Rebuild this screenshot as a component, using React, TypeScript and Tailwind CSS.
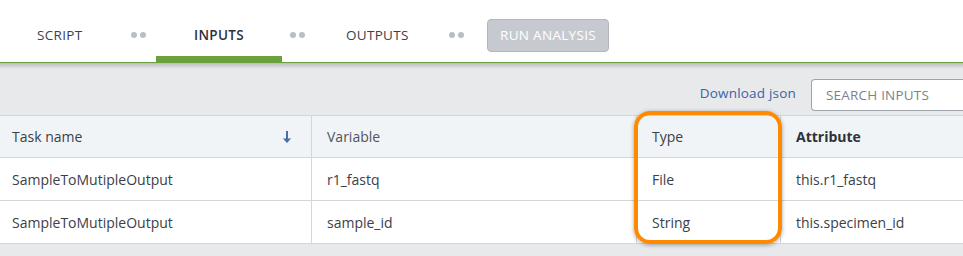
import React from "react";

const font = { fontFamily: '"Open Sans", "Liberation Sans", sans-serif' };

function Dots() {
  return (
    <div className="flex w-[15px] gap-[3px]">
      <span className="h-[6px] w-[6px] rounded-full bg-[#b9bec6]" />
      <span className="h-[6px] w-[6px] rounded-full bg-[#b9bec6]" />
    </div>
  );
}

export default function App() {
  const rows = [
    { task: "SampleToMutipleOutput", variable: "r1_fastq", type: "File", attr: "this.r1_fastq" },
    { task: "SampleToMutipleOutput", variable: "sample_id", type: "String", attr: "this.specimen_id" },
  ];
  return (
    <div className="h-[256px] w-[963px] overflow-hidden bg-[#e8e9eb] text-[#3b4049]" style={font}>
      {/* Header */}
      <div className="relative h-[63px] border-b border-[#6aa13c] bg-white">
        <div className="flex h-[62px] items-center pt-[8px] text-[13.5px] tracking-[0.3px]">
          <div className="ml-[37px] w-[94px] text-[#3b4049]">SCRIPT</div>
          <Dots />
          <div className="relative ml-[10px] flex h-[54px] w-[126px] items-center justify-center font-semibold text-[#2d323b]">
            INPUTS
            <div className="absolute bottom-0 left-0 h-[6px] w-[126px] bg-[#6aa13c]" />
          </div>
          <div className="ml-[8px]">
            <Dots />
          </div>
          <div className="ml-[41px] w-[103px] text-[#3b4049]">OUTPUTS</div>
          <Dots />
          <div className="ml-[23px] flex h-[33px] w-[122px] items-center justify-center rounded-[4px] border border-[#b3b8bf] bg-[#c6cad0] text-[13.5px] text-white">
            RUN ANALYSIS
          </div>
        </div>
      </div>
      <div className="h-[6px] bg-gradient-to-b from-[#b9bbbf] to-[#e8e9eb]" />
      {/* Toolbar */}
      <div className="flex h-[46px] items-end justify-end pb-[4px]">
        <a className="mb-[8px] mr-[15px] text-[13.5px] tracking-[0.2px] text-[#3b63a6]">Download json</a>
        <div className="flex h-[32px] w-[152px] items-center rounded-l-[4px] border border-r-0 border-[#9ea3aa] bg-white pl-[14px] text-[13.5px] tracking-[0.2px] text-[#7d828a]">
          SEARCH INPUTS
        </div>
      </div>
      {/* Table */}
      <div className="relative">
        <div className="grid grid-cols-[312px_325px_144px_182px] border-t border-[#d3d6da] text-[14px]">
          <div className="flex h-[42px] items-center justify-between border-r border-b border-[#d3d6da] bg-[#f1f4f6] pl-[12px] pr-[19px]">
            <span>Task name</span>
            <svg width="10" height="14" viewBox="0 0 10 14">
              <path d="M5 1 V12" stroke="#4a6ea8" strokeWidth="2" />
              <path d="M1.5 8.5 L5 12.5 L8.5 8.5" fill="#4a6ea8" stroke="#4a6ea8" strokeWidth="1" />
            </svg>
          </div>
          <div className="flex h-[42px] items-center border-r border-b border-[#d3d6da] bg-[#f1f4f6] pl-[15px] text-[#50555d]">Variable</div>
          <div className="flex h-[42px] items-center border-r border-b border-[#d3d6da] bg-[#f1f4f6] pl-[15px]">Type</div>
          <div className="flex h-[42px] items-center border-b border-[#d3d6da] bg-[#f1f4f6] pl-[15px] font-bold text-[#2d323b]">Attribute</div>
          {rows.map((r) => (
            <React.Fragment key={r.variable}>
              <div className="flex h-[43px] items-center border-r border-b border-[#d3d6da] bg-white pl-[12px]">{r.task}</div>
              <div className="flex h-[43px] items-center border-r border-b border-[#d3d6da] bg-white pl-[15px]">{r.variable}</div>
              <div className="flex h-[43px] items-center border-r border-b border-[#d3d6da] bg-white pl-[15px]">{r.type}</div>
              <div className="flex h-[43px] items-center border-b border-[#d3d6da] bg-white pl-[15px]">{r.attr}</div>
            </React.Fragment>
          ))}
        </div>
        <div className="pointer-events-none absolute left-[634px] top-[-4px] h-[133px] w-[148px] rounded-[16px] border-[4px] border-[#ff8a00] shadow-[0_1px_4px_rgba(0,0,0,0.35)]" />
      </div>
    </div>
  );
}
